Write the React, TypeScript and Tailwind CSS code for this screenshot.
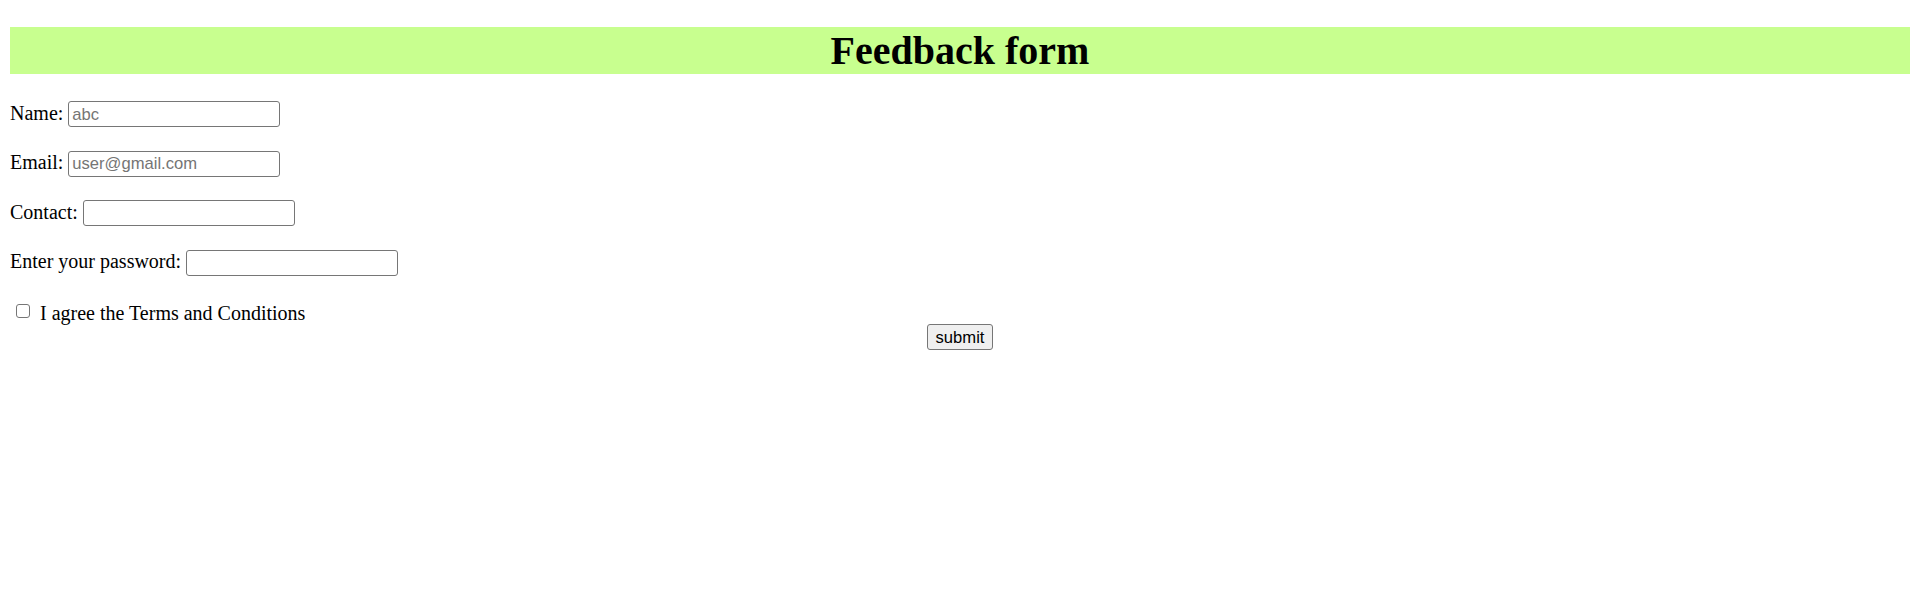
import React from 'react';

const fields = [
  { label: 'Name:', type: 'text', placeholder: 'abc' },
  { label: 'Email:', type: 'email', placeholder: 'user@gmail.com' },
  { label: 'Contact:', type: 'tel', placeholder: '' },
  { label: 'Enter your password:', type: 'password', placeholder: '' },
];

const FeedbackForm = () => {
  return (
    <div className="min-h-[612px] bg-white px-[10px] pt-[27px] font-['Liberation_Serif','Times_New_Roman',serif] text-black">
      <h1 className="h-[47px] bg-[#c8ff8f] text-center text-[40px] font-bold leading-[47px]">
        Feedback form
      </h1>

      <form className="mt-[27px] text-[20px]" onSubmit={(e) => e.preventDefault()}>
        <div className="flex flex-col gap-[23.5px]">
          {fields.map((f) => (
            <div key={f.label} className="flex h-[26px] items-baseline gap-[5px]">
              <label className="leading-[23px]">{f.label}</label>
              <input
                type={f.type}
                placeholder={f.placeholder}
                className="h-[26px] w-[212px] rounded-[3px] border border-[#767676] bg-white px-[3px] pt-[1px] font-['Liberation_Sans',Arial,sans-serif] text-[16.6px] placeholder:text-[#757575] outline-none"
              />
            </div>
          ))}
        </div>

        <div className="mt-[26px] flex h-[22px] items-start">
          <input
            type="checkbox"
            className="ml-[6px] mt-[2px] h-[14px] w-[14px] appearance-none rounded-[3px] border border-[#767676] bg-white"
          />
          <span className="ml-[10px] leading-[23px]">I agree the Terms and Conditions</span>
        </div>

        <div className="flex justify-center">
          <button
            type="submit"
            className="flex h-[26px] w-[66px] items-center justify-center rounded-[3px] border border-[#767676] bg-[#efefef] pt-[1px] font-['Liberation_Sans',Arial,sans-serif] text-[16.6px] leading-[19px] text-black"
          >
            submit
          </button>
        </div>
      </form>
    </div>
  );
};

export default function App() {
  return <FeedbackForm />;
}
